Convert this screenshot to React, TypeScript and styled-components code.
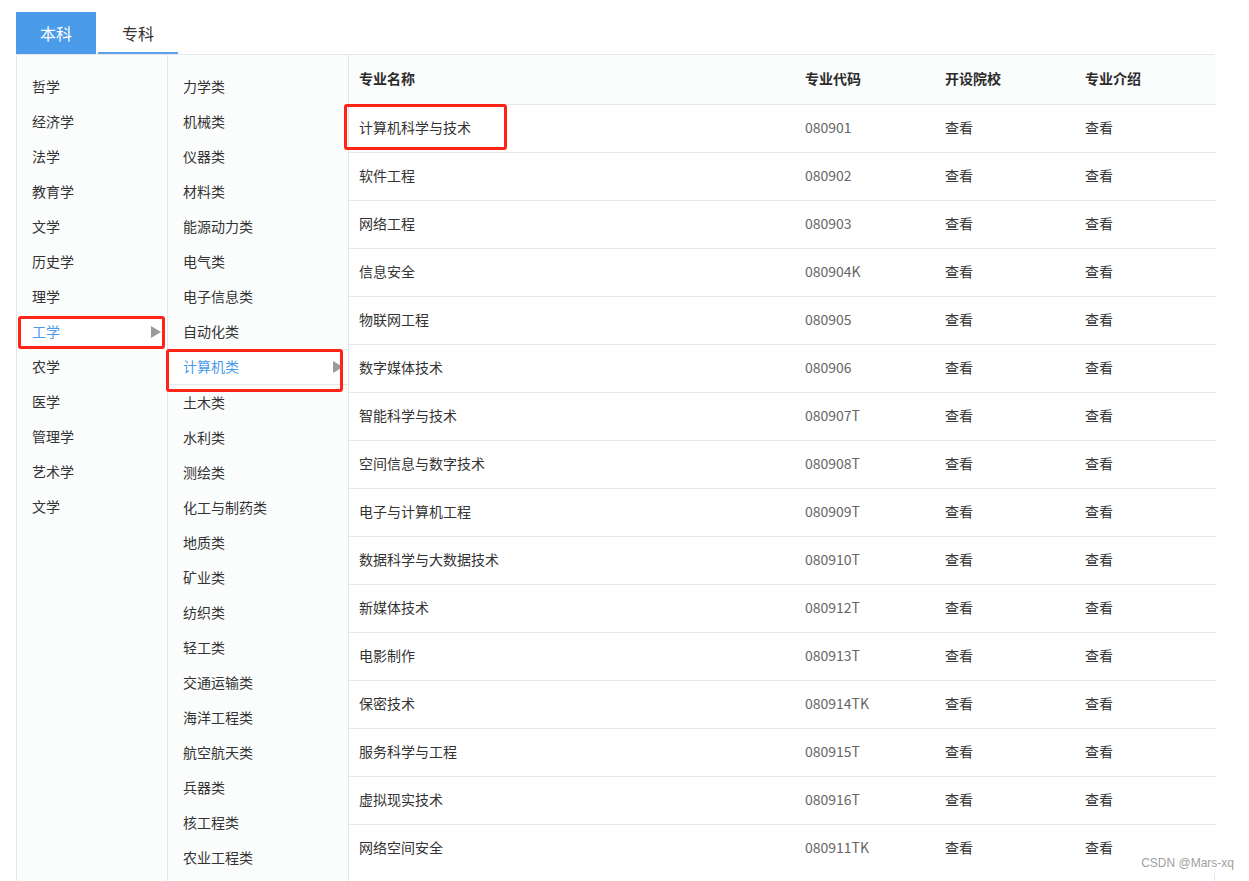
import React from 'react';
import styled, { createGlobalStyle } from 'styled-components';

const GlobalStyle = createGlobalStyle`
    html, body {
        margin: 0;
        padding: 0;
        background: #ffffff;
        font-family: "Noto Sans CJK SC", "Noto Sans", sans-serif;
        color: #333333;
        font-size: 14px;
    }
`;

const colors = {
    blue: '#4a9be9',
    border: '#e4e6e8',
    panel: '#fbfdfd',
    red: '#ff2318',
};

const Page = styled.div`
    position: relative;
    padding: 12px 34px 0 16px;
    height: 881px;
    overflow: hidden;
    box-sizing: border-box;
`;

const Tabs = styled.div`
    display: flex;
    gap: 2px;
    height: 42px;
`;

const Tab = styled.div<{ $active?: boolean }>`
    width: 80px;
    display: flex;
    align-items: center;
    justify-content: center;
    font-size: 16px;
    box-sizing: border-box;
    color: ${(p) => (p.$active ? '#ffffff' : '#333333')};
    background: ${(p) => (p.$active ? colors.blue : 'transparent')};
    border-bottom: 2px solid ${(p) => (p.$active ? colors.blue : '#5aa2ec')};
    padding-top: 2px;
`;

const Panel = styled.div`
    display: grid;
    grid-template-columns: 151px 181px 867px;
    border: 1px solid ${colors.border};
    border-bottom: none;
    height: 900px;
`;

const Column = styled.div`
    position: relative;
    background: ${colors.panel};
    border-right: 1px solid ${colors.border};
    padding-top: 14px;
`;

const Item = styled.div<{ $active?: boolean; $lined?: boolean; $indent: number }>`
    position: relative;
    height: ${(p) => (p.$lined ? 36 : 35)}px;
    line-height: 33px;
    padding-left: ${(p) => p.$indent}px;
    box-sizing: border-box;
    color: ${(p) => (p.$active ? colors.blue : '#333333')};
    background: ${(p) => (p.$active ? '#ffffff' : 'transparent')};
    border-top: 1px solid ${(p) => (p.$lined ? colors.border : 'transparent')};
    border-bottom: 1px solid ${(p) => (p.$lined ? colors.border : 'transparent')};
    white-space: nowrap;
`;

const Caret = styled.span<{ $right: number }>`
    position: absolute;
    right: ${(p) => p.$right}px;
    top: 50%;
    margin-top: -6px;
    width: 0;
    height: 0;
    border-top: 6px solid transparent;
    border-bottom: 6px solid transparent;
    border-left: 10px solid #9a9a9a;
`;

const Mark = styled.div`
    position: absolute;
    box-sizing: border-box;
    border: 3px solid ${colors.red};
    border-radius: 3px;
    pointer-events: none;
`;

const Table = styled.div`
    display: flex;
    flex-direction: column;
`;

const Row = styled.div<{ $head?: boolean }>`
    display: grid;
    grid-template-columns: 446px 140px 140px 1fr;
    height: ${(p) => (p.$head ? 50 : 48)}px;
    padding-bottom: 4px;
    align-items: center;
    border-bottom: 1px solid ${colors.border};
    box-sizing: border-box;
    background: ${(p) => (p.$head ? colors.panel : '#ffffff')};
    font-weight: ${(p) => (p.$head ? 700 : 400)};
    color: ${(p) => (p.$head ? '#2b2b2b' : '#333333')};
    &:last-child {
        border-bottom-color: transparent;
    }
`;

const Cell = styled.div<{ $muted?: boolean }>`
    padding-left: 10px;
    color: ${(p) => (p.$muted ? '#666666' : 'inherit')};
    white-space: nowrap;
`;

const Watermark = styled.div`
    position: absolute;
    right: 15px;
    top: 856px;
    font-family: "Liberation Sans", Arial, sans-serif;
    font-size: 12px;
    color: #a0a0a0;
`;

const disciplines = ['哲学', '经济学', '法学', '教育学', '文学', '历史学', '理学', '工学', '农学', '医学', '管理学', '艺术学', '文学'];

const categories = [
    '力学类', '机械类', '仪器类', '材料类', '能源动力类', '电气类', '电子信息类', '自动化类', '计算机类',
    '土木类', '水利类', '测绘类', '化工与制药类', '地质类', '矿业类', '纺织类', '轻工类', '交通运输类',
    '海洋工程类', '航空航天类', '兵器类', '核工程类', '农业工程类',
];

const majors: [string, string][] = [
    ['计算机科学与技术', '080901'],
    ['软件工程', '080902'],
    ['网络工程', '080903'],
    ['信息安全', '080904K'],
    ['物联网工程', '080905'],
    ['数字媒体技术', '080906'],
    ['智能科学与技术', '080907T'],
    ['空间信息与数字技术', '080908T'],
    ['电子与计算机工程', '080909T'],
    ['数据科学与大数据技术', '080910T'],
    ['新媒体技术', '080912T'],
    ['电影制作', '080913T'],
    ['保密技术', '080914TK'],
    ['服务科学与工程', '080915T'],
    ['虚拟现实技术', '080916T'],
    ['网络空间安全', '080911TK'],
];

const App: React.FC = () => {
    return (
        <Page>
            <GlobalStyle />
            <Tabs>
                <Tab $active>本科</Tab>
                <Tab>专科</Tab>
            </Tabs>
            <Panel>
                <Column>
                    {disciplines.map((d, i) => (
                        <Item key={i} $indent={15} $active={d === '工学'}>
                            {d}
                            {d === '工学' && <Caret $right={6} />}
                        </Item>
                    ))}
                </Column>
                <Column>
                    {categories.map((c) => (
                        <Item key={c} $indent={15} $active={c === '计算机类'} $lined={c === '计算机类'}>
                            {c}
                            {c === '计算机类' && <Caret $right={5} />}
                        </Item>
                    ))}
                </Column>
                <Table>
                    <Row $head>
                        <Cell>专业名称</Cell>
                        <Cell>专业代码</Cell>
                        <Cell>开设院校</Cell>
                        <Cell>专业介绍</Cell>
                    </Row>
                    {majors.map(([name, code]) => (
                        <Row key={code}>
                            <Cell>{name}</Cell>
                            <Cell $muted>{code}</Cell>
                            <Cell>查看</Cell>
                            <Cell>查看</Cell>
                        </Row>
                    ))}
                </Table>
            </Panel>
            <Mark style={{ left: 18, top: 316, width: 147, height: 33 }} />
            <Mark style={{ left: 166, top: 349, width: 177, height: 43 }} />
            <Mark style={{ left: 344, top: 104, width: 163, height: 46 }} />
            <Watermark>CSDN @Mars-xq</Watermark>
        </Page>
    );
};

export default App;
